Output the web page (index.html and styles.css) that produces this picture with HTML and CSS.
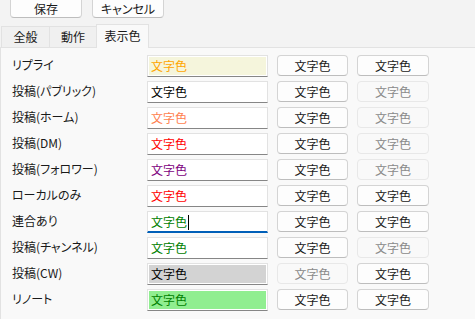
FILE: index.html
```html
<!DOCTYPE html>
<html lang="ja">
<head>
    <meta charset="UTF-8">
    <title>表示色</title>
    <link rel="stylesheet" href="styles.css">
</head>
<body>
    <div class="toolbar">
        <button class="btn">保存</button>
        <button class="btn">キャンセル</button>
    </div>

    <div class="tabs">
        <div class="tab">全般</div>
        <div class="tab">動作</div>
        <div class="tab selected">表示色</div>
    </div>

    <div class="panel">
        <div class="grid">
            <div class="label">リプライ</div>
            <div class="box"><div class="fill" style="background:#f5f5dc;color:#ffa500">文字色</div></div>
            <button class="btn">文字色</button>
            <button class="btn">文字色</button>

            <div class="label">投稿(パブリック)</div>
            <div class="box"><div class="fill" style="color:#000">文字色</div></div>
            <button class="btn">文字色</button>
            <button class="btn" disabled>文字色</button>

            <div class="label">投稿(ホーム)</div>
            <div class="box"><div class="fill" style="color:#ff7f50">文字色</div></div>
            <button class="btn">文字色</button>
            <button class="btn" disabled>文字色</button>

            <div class="label">投稿(DM)</div>
            <div class="box"><div class="fill" style="color:#ff0000">文字色</div></div>
            <button class="btn">文字色</button>
            <button class="btn" disabled>文字色</button>

            <div class="label">投稿(フォロワー)</div>
            <div class="box"><div class="fill" style="color:#800080">文字色</div></div>
            <button class="btn">文字色</button>
            <button class="btn" disabled>文字色</button>

            <div class="label">ローカルのみ</div>
            <div class="box"><div class="fill" style="color:#ff0000">文字色</div></div>
            <button class="btn">文字色</button>
            <button class="btn">文字色</button>

            <div class="label">連合あり</div>
            <div class="box focused"><div class="fill" style="color:#008000">文字色<span class="caret"></span></div></div>
            <button class="btn">文字色</button>
            <button class="btn">文字色</button>

            <div class="label">投稿(チャンネル)</div>
            <div class="box"><div class="fill" style="color:#008000">文字色</div></div>
            <button class="btn">文字色</button>
            <button class="btn" disabled>文字色</button>

            <div class="label">投稿(CW)</div>
            <div class="box"><div class="fill" style="background:#d3d3d3;color:#000">文字色</div></div>
            <button class="btn" disabled>文字色</button>
            <button class="btn">文字色</button>

            <div class="label">リノート</div>
            <div class="box"><div class="fill" style="background:#90ee90;color:#008000">文字色</div></div>
            <button class="btn">文字色</button>
            <button class="btn">文字色</button>
        </div>
    </div>
</body>
</html>
```

FILE: styles.css
```css
body, html {
    margin: 0;
    padding: 0;
    height: 100%;
    overflow: hidden;
}
body {
    background: #f3f3f3;
    font-family: "Noto Sans CJK JP", "Noto Sans", sans-serif;
    font-size: 12px;
    font-feature-settings: "palt";
    color: #1a1a1a;
}

.btn {
    font-family: inherit;
    font-size: 12px;
    font-feature-settings: "palt";
    color: #1a1a1a;
    background: #fdfdfd;
    border: 1px solid #d4d4d4;
    border-bottom-color: #bdbdbd;
    border-radius: 4px;
    height: 21px;
    padding: 0;
    margin: 0;
    line-height: 18px;
}
.btn:disabled {
    background: #f9f9f9;
    border-color: #e8e8e8;
    color: #8a8a8a;
}

/* top buttons, their top edge is cut off by the window */
.toolbar {
    display: flex;
    gap: 10px;
    padding-left: 10px;
}
.toolbar .btn {
    width: 72px;
    height: 18px;
    border-top: none;
    border-radius: 0 0 4px 4px;
    line-height: 16px;
}

.tabs {
    display: flex;
    align-items: flex-end;
    margin-top: 6px;
    padding-left: 1px;
    height: 23px;
}
.tab {
    height: 21px;
    line-height: 20px;
    box-sizing: border-box;
    padding: 0;
    text-align: center;
    white-space: nowrap;
    border: 1px solid #e2e2e2;
    border-bottom: none;
    background: #f0f0f0;
    margin-right: -1px;
}
.tab:first-child {
    width: 49px;
}
.tab:nth-child(2) {
    width: 48px;
}
.tab.selected {
    height: 24px;
    line-height: 22px;
    width: 53px;
    background: #f9f9f9;
    position: relative;
    top: 1px;
}

.panel {
    background: #f9f9f9;
    border: 1px solid #e2e2e2;
    border-right: none;
    height: 280px;
    padding: 7px 0 0 11px;
}

.grid {
    display: grid;
    grid-template-columns: 126px 121px 71px 72px;
    column-gap: 9px;
    row-gap: 4px;
    align-items: start;
}
.label {
    height: 22px;
    line-height: 20px;
    white-space: nowrap;
}

.box {
    height: 22px;
    box-sizing: border-box;
    background: #fff;
    border: 1px solid #e2e2e2;
    border-bottom: 1px solid #868686;
    padding: 1px;
}
.box.focused {
    border-bottom: 2px solid #005fb8;
}
.fill {
    height: 100%;
    line-height: 18px;
    padding-left: 2px;
    background: #fff;
}
.caret {
    display: inline-block;
    width: 1px;
    height: 15px;
    background: #000;
    vertical-align: -3px;
    margin-left: 1px;
}
```
